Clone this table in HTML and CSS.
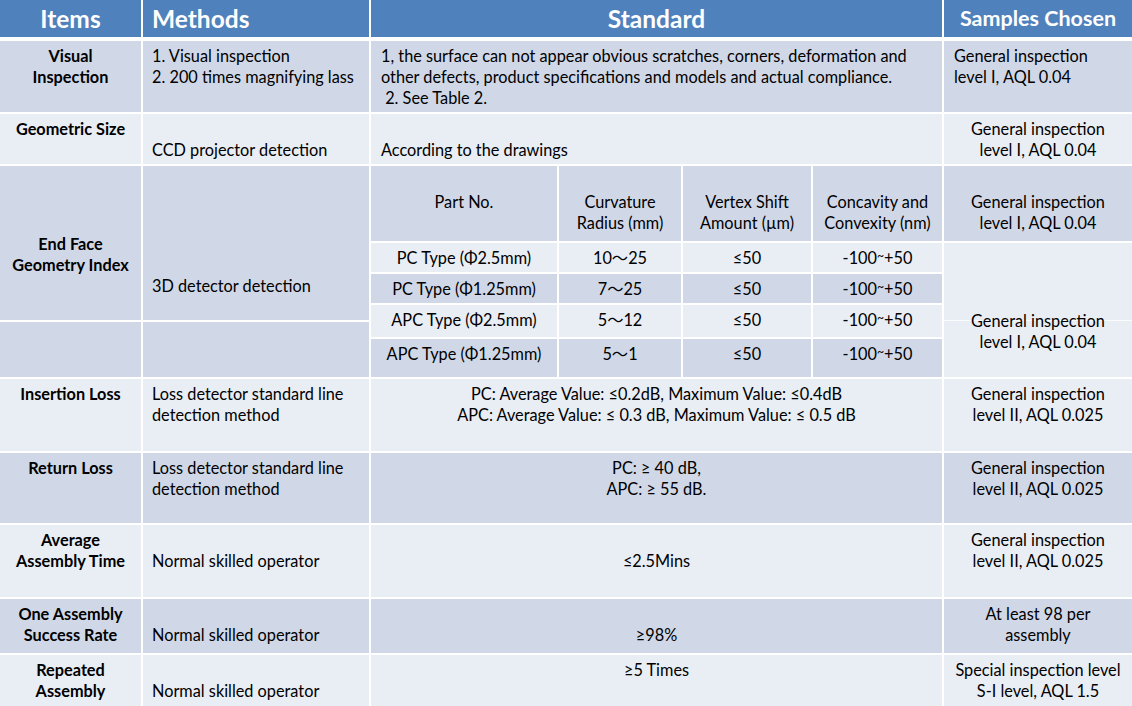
FILE: index.html
```html
<!DOCTYPE html>
<html lang="en">
<head>
<meta charset="utf-8">
<title>Inspection Standard</title>
<link rel="stylesheet" href="styles.css">
</head>
<body>
<div class="table">
  <div class="row head">
    <div class="cell center">Items</div>
    <div class="cell method">Methods</div>
    <div class="cell center">Standard</div>
    <div class="cell center small-head">Samples Chosen</div>
  </div>

  <div class="row dark r-visual">
    <div class="cell item">Visual<br>Inspection</div>
    <div class="cell method">1. Visual inspection<br>2. 200 times magnifying lass</div>
    <div class="cell">1, the surface can not appear obvious scratches, corners, deformation and<br>other defects, product specifications and models and actual compliance.<br>&nbsp;2. See Table 2.</div>
    <div class="cell">General inspection<br>level I, AQL 0.04</div>
  </div>

  <div class="row light r-geo">
    <div class="cell item">Geometric Size</div>
    <div class="cell method skip1">CCD projector detection</div>
    <div class="cell skip1">According to the drawings</div>
    <div class="cell center">General inspection<br>level I, AQL 0.04</div>
  </div>

  <div class="row r-end">
    <div class="left-block">
      <div class="cell item bg-d skip3">End Face<br>Geometry Index</div>
      <div class="cell method bg-d skip5">3D detector detection</div>
      <div class="cell bg-d"></div>
      <div class="cell bg-d"></div>
    </div>
    <div class="inner">
      <div class="icell bg-d skip1">Part No.</div>
      <div class="icell bg-d skip1">Curvature<br>Radius (mm)</div>
      <div class="icell bg-d skip1">Vertex Shift<br>Amount (µm)</div>
      <div class="icell bg-d skip1">Concavity and<br>Convexity (nm)</div>

      <div class="icell bg-l">PC Type (Φ2.5mm)</div>
      <div class="icell bg-l">10～25</div>
      <div class="icell bg-l">≤50</div>
      <div class="icell bg-l">-100<span class="tilde">~</span>+50</div>

      <div class="icell bg-d">PC Type (Φ1.25mm)</div>
      <div class="icell bg-d">7～25</div>
      <div class="icell bg-d">≤50</div>
      <div class="icell bg-d">-100<span class="tilde">~</span>+50</div>

      <div class="icell bg-l">APC Type (Φ2.5mm)</div>
      <div class="icell bg-l">5～12</div>
      <div class="icell bg-l">≤50</div>
      <div class="icell bg-l">-100<span class="tilde">~</span>+50</div>

      <div class="icell bg-d">APC Type (Φ1.25mm)</div>
      <div class="icell bg-d">5～1</div>
      <div class="icell bg-d">≤50</div>
      <div class="icell bg-d">-100<span class="tilde">~</span>+50</div>
    </div>
    <div class="side">
      <div class="cell center bg-d side-top skip1">General inspection<br>level I, AQL 0.04</div>
      <div class="cell center bg-l side-bottom skip3"><span class="txt">General inspection<br>level I, AQL 0.04</span></div>
    </div>
  </div>

  <div class="row light r-ins">
    <div class="cell item">Insertion Loss</div>
    <div class="cell method">Loss detector standard line<br>detection method</div>
    <div class="cell center">PC: Average Value: ≤0.2dB, Maximum Value: ≤0.4dB<br>APC: Average Value: ≤ 0.3 dB, Maximum Value: ≤ 0.5 dB</div>
    <div class="cell center">General inspection<br>level II, AQL 0.025</div>
  </div>

  <div class="row dark r-ret">
    <div class="cell item">Return Loss</div>
    <div class="cell method">Loss detector standard line<br>detection method</div>
    <div class="cell center">PC: ≥ 40 dB,<br>APC: ≥ 55 dB.</div>
    <div class="cell center">General inspection<br>level II, AQL 0.025</div>
  </div>

  <div class="row light r-avg">
    <div class="cell item">Average<br>Assembly Time</div>
    <div class="cell method skip1">Normal skilled operator</div>
    <div class="cell center skip1">≤2.5Mins</div>
    <div class="cell center">General inspection<br>level II, AQL 0.025</div>
  </div>

  <div class="row dark r-one">
    <div class="cell item">One Assembly<br>Success Rate</div>
    <div class="cell method skip1">Normal skilled operator</div>
    <div class="cell center skip1">≥98%</div>
    <div class="cell center">At least 98 per<br>assembly</div>
  </div>

  <div class="row light r-rep">
    <div class="cell item">Repeated<br>Assembly</div>
    <div class="cell method skip1">Normal skilled operator</div>
    <div class="cell center">≥5 Times</div>
    <div class="cell center">Special inspection level<br>S-I level, AQL 1.5</div>
  </div>
</div>
</body>
</html>
```

FILE: styles.css
```css
html, body {
  margin: 0;
  padding: 0;
  overflow: hidden;
  background: #ffffff;
}

body {
  width: 1132px;
  height: 706px;
  font-family: Lato, "Noto Sans CJK SC", sans-serif;
  font-size: 16.3px;
  line-height: 21px;
  color: #000000;
}

.table {
  display: flex;
  flex-direction: column;
  gap: 2px;
}

.row {
  display: grid;
  grid-template-columns: 141px 226px 571px 188px;
  column-gap: 2px;
}

.cell {
  padding: 4px 10px 0;
  white-space: nowrap;
  box-sizing: border-box;
}

.cell.method {
  padding-left: 9px;
}

.head {
  height: 37px;
  margin-bottom: 2px;
}

.head .cell {
  background: #4f81bd;
  color: #ffffff;
  font-weight: 700;
  font-size: 24.5px;
  line-height: 37px;
  padding-top: 0;
}

.head .cell.small-head {
  font-size: 21.5px;
}

.dark > .cell,
.bg-d {
  background: #d0d8e8;
}

.light > .cell,
.bg-l {
  background: #e9edf4;
}

.center {
  text-align: center;
}

.item {
  text-align: center;
  font-weight: 700;
  padding-left: 2px;
  padding-right: 2px;
}

.r-visual { height: 71px; }
.r-geo { height: 50px; }
.r-end { height: 211px; }
.r-ins { height: 72px; }
.r-ret { height: 70px; }
.r-avg { height: 72px; }
.r-one { height: 54px; }
.r-rep { height: 51px; }

.left-block {
  grid-column: 1 / 3;
  display: grid;
  grid-template-columns: 141px 226px;
  grid-template-rows: 154px 55px;
  gap: 2px;
}

.inner {
  display: grid;
  grid-template-columns: 186px 122px 128px 129px;
  grid-template-rows: 75px 29px 29px 32px 38px;
  gap: 2px;
}

.icell {
  padding: 4px 2px 0;
  text-align: center;
  white-space: nowrap;
  box-sizing: border-box;
}

.tilde {
  display: inline-block;
  font-size: 0.75em;
  vertical-align: 0.3em;
  line-height: 1;
}

.side {
  display: flex;
  flex-direction: column;
  gap: 2px;
}

.side-top {
  height: 75px;
}

.side-bottom {
  flex: 1;
  position: relative;
}

.side-bottom::before {
  content: "";
  position: absolute;
  left: 0;
  right: 0;
  top: 77px;
  height: 1px;
  background: rgba(255, 255, 255, 0.75);
}

.side-bottom .txt {
  position: relative;
}

.skip1 { padding-top: 25px; }
.skip3 { padding-top: 67px; }
.skip5 { padding-top: 109px; }
```
